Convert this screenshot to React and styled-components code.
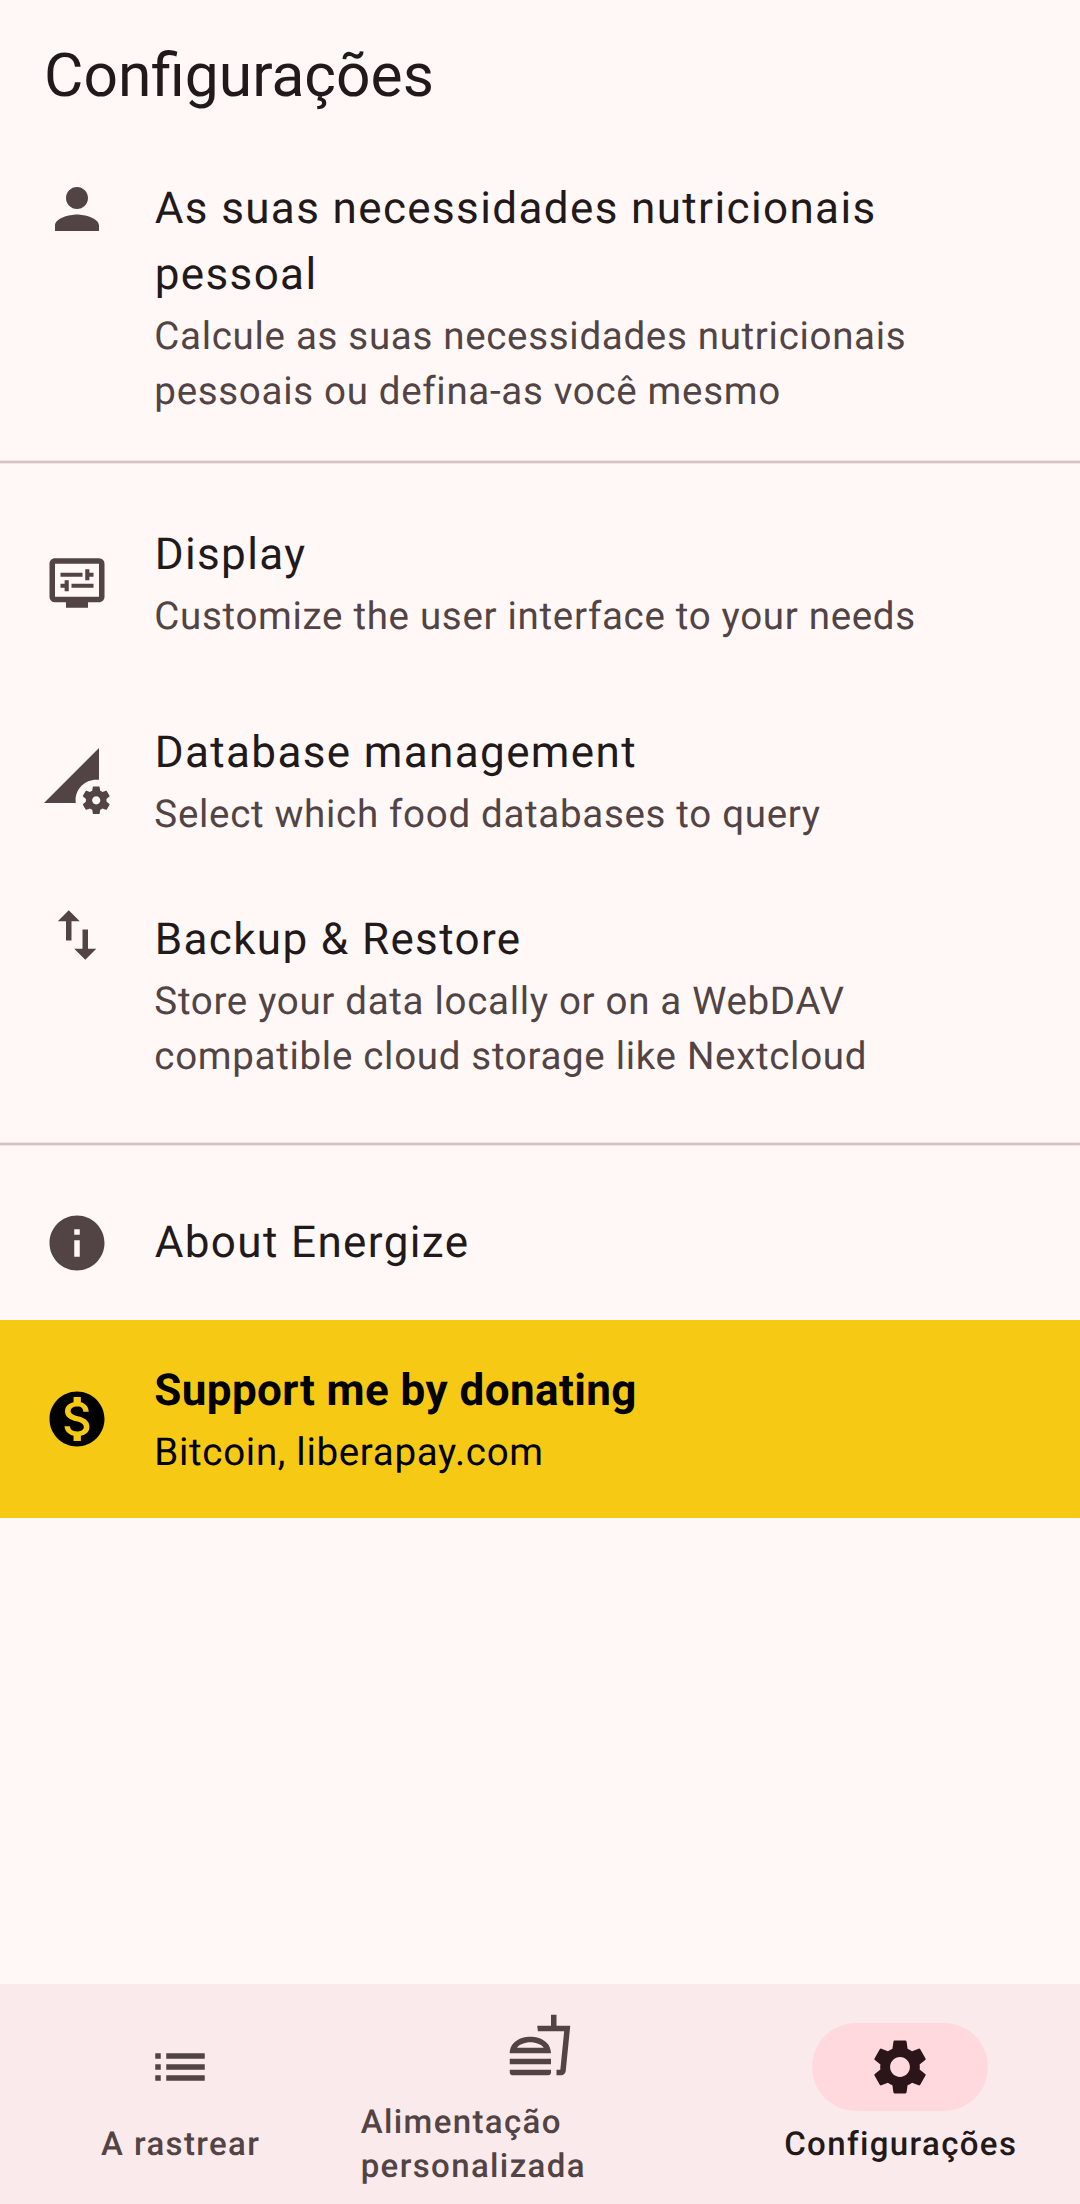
import React from "react";
import styled, { createGlobalStyle } from "styled-components";
import {
  MdPerson, MdDisplaySettings, MdPermDataSetting, MdImportExport,
  MdInfo, MdMonetizationOn, MdList, MdOutlineFastfood, MdSettings,
} from "react-icons/md";

const GlobalStyle = createGlobalStyle`
  * { box-sizing: border-box; }
  body {
    margin: 0;
    background: #fff8f7;
    font-family: Roboto, sans-serif;
    text-rendering: geometricPrecision;
  }
`;

const Screen = styled.div`
  display: flex;
  flex-direction: column;
  width: 1080px;
  height: 2204px;
  color: #22191a;
`;

const AppBar = styled.header`
  height: 154px;
  padding: 37px 44px 0;
`;

const PageTitle = styled.h1`
  margin: 0;
  font-size: 60.5px;
  font-weight: 400;
  line-height: 77px;
`;

const List = styled.main`
  flex: 1;
  display: flex;
  flex-direction: column;
`;

const Tile = styled.section`
  display: flex;
  align-items: ${(p) => (p.$top ? "flex-start" : "center")};
  gap: 44px;
  height: ${(p) => p.$height}px;
  padding: ${(p) => (p.$top ? "22px" : "0")} 66px ${(p) => (p.$top ? "22px" : "0")} 44px;
  background: ${(p) => (p.$highlight ? "#f6c915" : "transparent")};
  color: ${(p) => (p.$highlight ? "#000" : "#524344")};
  svg { width: 66px; height: 66px; flex: none; }
`;

const TileText = styled.div`
  flex: 1;
  margin-top: ${(p) => p.$offset || 0}px;
  padding-bottom: ${(p) => (p.$single ? 2 : 1)}px;
`;

const TileTitle = styled.div`
  padding-left: ${(p) => (p.$highlight ? 0.2 : 0.7)}px;
  font-size: 44px;
  line-height: 66px;
  letter-spacing: ${(p) => (p.$highlight ? 0.4125 : 1.375)}px;
  font-weight: ${(p) => (p.$highlight ? 700 : 400)};
  color: ${(p) => (p.$highlight ? "#000" : "#22191a")};
`;

const TileSubtitle = styled.div`
  margin-top: 2px;
  padding-left: 0.35px;
  font-size: 38.5px;
  line-height: 55px;
  letter-spacing: 0.6875px;
`;

const Divider = styled.hr`
  width: 100%;
  height: 4px;
  margin: 20px 0;
  border: solid #f0e4e4;
  border-width: 1px 0;
  background: #d6c2c3;
`;

const NavBar = styled.nav`
  display: grid;
  grid-template-columns: repeat(3, 1fr);
  height: 220px;
  background: #fbeaeb;
`;

const NavItem = styled.div`
  display: flex;
  flex-direction: column;
  align-items: center;
  padding-top: ${(p) => (p.$tall ? 17 : 39)}px;
  color: ${(p) => (p.$active ? "#22191a" : "#524344")};
`;

const Indicator = styled.div`
  display: flex;
  align-items: center;
  justify-content: center;
  width: 176px;
  height: 88px;
  border-radius: 44px;
  background: ${(p) => (p.$active ? "#ffd9de" : "transparent")};
  color: ${(p) => (p.$active ? "#2c1518" : "inherit")};
  svg { width: 66px; height: 66px; }
`;

const NavLabel = styled.div`
  align-self: ${(p) => (p.$start ? "stretch" : "center")};
  margin-top: 12px;
  padding-left: ${(p) => (p.$start ? 0.7 : 1.4)}px;
  font-size: 33px;
  line-height: 44px;
  font-weight: 500;
  letter-spacing: 1.375px;
`;

const groups = [
  [
    {
      Icon: MdPerson,
      title: "As suas necessidades nutricionais pessoal",
      subtitle: "Calcule as suas necessidades nutricionais pessoais ou defina-as você mesmo",
      height: 286,
      top: true,
      offset: -1,
    },
  ],
  [
    { Icon: MdDisplaySettings, title: "Display", subtitle: "Customize the user interface to your needs", height: 198 },
    { Icon: MdPermDataSetting, title: "Database management", subtitle: "Select which food databases to query", height: 198 },
    {
      Icon: MdImportExport,
      title: "Backup & Restore",
      subtitle: "Store your data locally or on a WebDAV compatible cloud storage like Nextcloud",
      height: 242,
      top: true,
      offset: 4,
    },
  ],
  [
    { Icon: MdInfo, title: "About Energize", height: 154 },
    { Icon: MdMonetizationOn, title: "Support me by donating", subtitle: "Bitcoin, liberapay.com", height: 198, highlight: true },
  ],
];

const tabs = [
  { Icon: MdList, label: "A rastrear" },
  { Icon: MdOutlineFastfood, label: "Alimentação personalizada", tall: true },
  { Icon: MdSettings, label: "Configurações", active: true },
];

export default function App() {
  return (
    <Screen>
      <GlobalStyle />
      <AppBar>
        <PageTitle>Configurações</PageTitle>
      </AppBar>
      <List>
        {groups.map((group, i) => (
          <React.Fragment key={i}>
            {i > 0 && <Divider />}
            {group.map(({ Icon, title, subtitle, height, top, offset, highlight }) => (
              <Tile key={title} $height={height} $top={top} $highlight={highlight}>
                <Icon />
                <TileText $offset={offset} $single={!subtitle}>
                  <TileTitle $highlight={highlight}>{title}</TileTitle>
                  {subtitle && <TileSubtitle>{subtitle}</TileSubtitle>}
                </TileText>
              </Tile>
            ))}
          </React.Fragment>
        ))}
      </List>
      <NavBar>
        {tabs.map(({ Icon, label, tall, active }) => (
          <NavItem key={label} $tall={tall} $active={active}>
            <Indicator $active={active}>
              <Icon />
            </Indicator>
            <NavLabel $start={tall}>{label}</NavLabel>
          </NavItem>
        ))}
      </NavBar>
    </Screen>
  );
}
